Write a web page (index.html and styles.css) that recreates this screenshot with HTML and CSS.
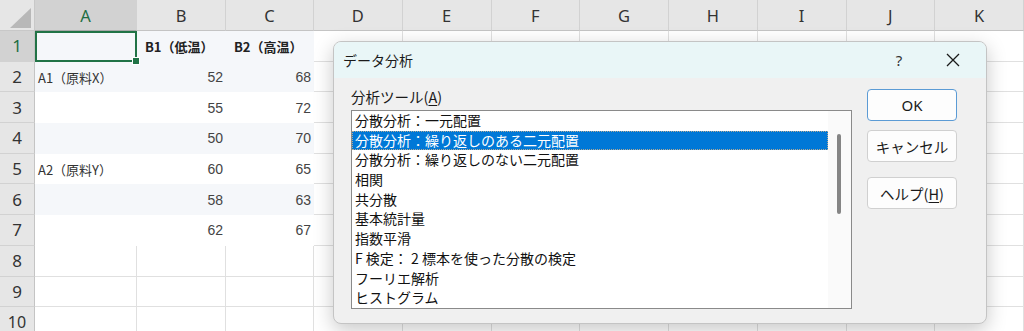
FILE: index.html
```html
<!DOCTYPE html>
<html lang="ja">
<head>
<meta charset="utf-8">
<title>データ分析</title>
<link rel="stylesheet" href="styles.css">
</head>
<body>
<div class="sheet">
  <div class="corner"><svg width="35" height="31" viewBox="0 0 35 31"><polygon points="31,8 31,28 10,28" fill="#b8b8b8"/></svg></div>
  <div class="ch sel">A</div><div class="ch">B</div><div class="ch">C</div><div class="ch">D</div><div class="ch">E</div><div class="ch">F</div><div class="ch">G</div><div class="ch">H</div><div class="ch">I</div><div class="ch">J</div><div class="ch">K</div>

  <div class="rh sel">1</div>
  <div class="c t band active"></div><div class="c t band b">B1（低温）</div><div class="c t band b">B2（高温）</div>
  <div class="c"></div><div class="c"></div><div class="c"></div><div class="c"></div><div class="c"></div><div class="c"></div><div class="c"></div><div class="c"></div>

  <div class="rh">2</div>
  <div class="c t band">A1（原料X）</div><div class="c t band n">52</div><div class="c t band n">68</div>
  <div class="c"></div><div class="c"></div><div class="c"></div><div class="c"></div><div class="c"></div><div class="c"></div><div class="c"></div><div class="c"></div>

  <div class="rh">3</div>
  <div class="c t"></div><div class="c t n">55</div><div class="c t n">72</div>
  <div class="c"></div><div class="c"></div><div class="c"></div><div class="c"></div><div class="c"></div><div class="c"></div><div class="c"></div><div class="c"></div>

  <div class="rh">4</div>
  <div class="c t band"></div><div class="c t band n">50</div><div class="c t band n">70</div>
  <div class="c"></div><div class="c"></div><div class="c"></div><div class="c"></div><div class="c"></div><div class="c"></div><div class="c"></div><div class="c"></div>

  <div class="rh">5</div>
  <div class="c t">A2（原料Y）</div><div class="c t n">60</div><div class="c t n">65</div>
  <div class="c"></div><div class="c"></div><div class="c"></div><div class="c"></div><div class="c"></div><div class="c"></div><div class="c"></div><div class="c"></div>

  <div class="rh">6</div>
  <div class="c t band"></div><div class="c t band n">58</div><div class="c t band n">63</div>
  <div class="c"></div><div class="c"></div><div class="c"></div><div class="c"></div><div class="c"></div><div class="c"></div><div class="c"></div><div class="c"></div>

  <div class="rh">7</div>
  <div class="c t"></div><div class="c t n">62</div><div class="c t n">67</div>
  <div class="c"></div><div class="c"></div><div class="c"></div><div class="c"></div><div class="c"></div><div class="c"></div><div class="c"></div><div class="c"></div>

  <div class="rh">8</div>
  <div class="c"></div><div class="c"></div><div class="c"></div><div class="c"></div><div class="c"></div><div class="c"></div><div class="c"></div><div class="c"></div><div class="c"></div><div class="c"></div><div class="c"></div>

  <div class="rh">9</div>
  <div class="c"></div><div class="c"></div><div class="c"></div><div class="c"></div><div class="c"></div><div class="c"></div><div class="c"></div><div class="c"></div><div class="c"></div><div class="c"></div><div class="c"></div>

  <div class="rh r10">10</div>
  <div class="c"></div><div class="c"></div><div class="c"></div><div class="c"></div><div class="c"></div><div class="c"></div><div class="c"></div><div class="c"></div><div class="c"></div><div class="c"></div><div class="c"></div>
</div>

<div class="dialog">
  <div class="titlebar">
    <span class="title">データ分析</span>
    <span class="help">?</span>
    <span class="close"><svg width="14" height="14" viewBox="0 0 14 14"><path d="M1 1 L13 13 M13 1 L1 13" stroke="#1a1a1a" stroke-width="1.3" fill="none"/></svg></span>
  </div>
  <div class="body">
    <div class="left">
      <div class="label">分析ツール(<u>A</u>)</div>
      <div class="listbox">
        <div class="items">
          <div class="item">分散分析：一元配置</div>
          <div class="item selected">分散分析：繰り返しのある二元配置</div>
          <div class="item">分散分析：繰り返しのない二元配置</div>
          <div class="item">相関</div>
          <div class="item">共分散</div>
          <div class="item">基本統計量</div>
          <div class="item">指数平滑</div>
          <div class="item">F 検定： 2 標本を使った分散の検定</div>
          <div class="item">フーリエ解析</div>
          <div class="item">ヒストグラム</div>
        </div>
        <div class="scroll"><div class="thumb"></div></div>
      </div>
    </div>
    <div class="buttons">
      <div class="btn primary">OK</div>
      <div class="btn">キャンセル</div>
      <div class="btn help-btn">ヘルプ(<u>H</u>)</div>
    </div>
  </div>
</div>
</body>
</html>
```

FILE: styles.css
```css
* { box-sizing: border-box; }
html, body { margin: 0; padding: 0; }
body {
  width: 1024px;
  height: 331px;
  overflow: hidden;
  background: #fff;
  font-family: "Noto Sans CJK JP", "Noto Sans", sans-serif;
  position: relative;
}
.sheet {
  display: grid;
  grid-template-columns: 35px 102px 89px 88px repeat(8, 88.75px);
  grid-template-rows: 31px repeat(10, 30.7px);
}
.corner {
  background: #e6e6e6;
  border-right: 1px solid #c8c8c8;
  border-bottom: 1px solid #c8c8c8;
}
.corner svg { display: block; }
.ch {
  background: #e6e6e6;
  border-right: 1px solid #d2d2d2;
  border-bottom: 1px solid #c4c4c4;
  display: flex;
  align-items: center;
  justify-content: center;
  font-family: "Noto Sans", sans-serif;
  font-size: 16.5px;
  color: #333;
}
.ch.sel {
  background: #d2d2d2;
  color: #1e6e42;
  border-bottom: 1px solid #a8a8a8;
}
.rh {
  background: #e6e6e6;
  border-right: 1px solid #c4c4c4;
  border-bottom: 1px solid #d2d2d2;
  display: flex;
  align-items: center;
  justify-content: center;
  font-family: "Noto Sans", sans-serif;
  font-size: 17px;
  color: #333;
}
.rh.r10 { align-items: flex-start; padding-top: 4px; font-size: 16px; }
.rh.sel {
  background: #d2d2d2;
  color: #1e6e42;
}
.c {
  border-right: 1px solid #e0e0e0;
  border-bottom: 1px solid #e0e0e0;
  display: flex;
  align-items: center;
  padding: 0 3px;
  font-size: 13px;
  color: #333;
  white-space: nowrap;
  position: relative;
}
.c.t { border: none; background: #fff; }
.c.t.band { background: #f5f7fa; }
.c.b { font-weight: bold; color: #222; padding-left: 8px; }
.c.n { justify-content: flex-end; font-family: "Liberation Sans", sans-serif; font-size: 14px; color: #444; }
.c.active { outline: 2px solid #217346; outline-offset: -2px; z-index: 1; }
.c.active::after {
  content: "";
  position: absolute;
  right: -3px;
  bottom: -3px;
  width: 6px;
  height: 6px;
  background: #217346;
  border: 1px solid #fff;
}

.dialog {
  position: absolute;
  left: 333px;
  top: 41px;
  width: 654px;
  height: 283px;
  border: 1px solid #c4c4c4;
  border-radius: 8px;
  background: #f0f0f0;
  overflow: hidden;
  box-shadow: 0 6px 20px rgba(0, 0, 0, 0.22);
  display: flex;
  flex-direction: column;
}
.titlebar {
  height: 36px;
  background: #e9f6f7;
  display: flex;
  align-items: center;
  padding-left: 9px;
  flex: none;
}
.title { font-size: 14px; color: #1a1a1a; flex: 1; }
.help { font-family: "Noto Sans", sans-serif; font-size: 15px; color: #333; width: 20px; text-align: center; margin-right: 37px; }
.close { width: 14px; height: 14px; margin-right: 26px; display: flex; }
.body {
  flex: 1;
  display: flex;
  padding: 8px 0 0 17px;
  gap: 15px;
}
.left { display: flex; flex-direction: column; }
.label { font-size: 14.5px; color: #1a1a1a; height: 22px; line-height: 22px; margin-bottom: 2px; }
.label u, .btn u { text-decoration-thickness: 1px; text-underline-offset: 2px; }
.listbox {
  width: 501px;
  height: 199px;
  border: 1px solid #8a8a8a;
  background: #fff;
  display: flex;
}
.items { width: 476px; }
.item {
  height: 19.7px;
  line-height: 19.7px;
  font-size: 14px;
  padding-left: 3px;
  color: #111;
  white-space: nowrap;
}
.item.selected {
  background: #0078d7;
  color: #fff;
  outline: 1px dotted rgba(255, 190, 120, 0.7);
  outline-offset: -1px;
}
.scroll {
  flex: 1;
  background: #fafafa;
  position: relative;
  padding: 23px 0 0 9px;
}
.thumb {
  width: 4px;
  height: 80px;
  background: #858585;
  border-radius: 2px;
}
.buttons {
  display: flex;
  flex-direction: column;
  padding-top: 3px;
}
.btn {
  width: 90px;
  height: 32px;
  background: #fdfdfd;
  border: 1px solid #d0d0d0;
  border-radius: 4px;
  display: flex;
  align-items: center;
  justify-content: center;
  font-size: 14.5px;
  color: #1a1a1a;
  margin-bottom: 9px;
}
.btn.primary { border-color: #5b9bd5; font-family: "Noto Sans", sans-serif; font-size: 15px; }
.btn.help-btn { margin-top: 6px; }
```
